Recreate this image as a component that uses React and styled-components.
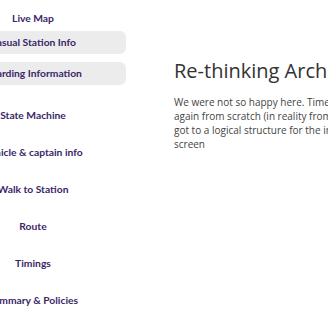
import React from "react";
import styled, { createGlobalStyle } from "styled-components";

const navItems = [
  { label: "Live Map", top: 7 },
  { label: "Casual Station Info", top: 1, active: true },
  { label: "Boarding Information", top: 8, active: true },
  { label: "State Machine", top: 19 },
  { label: "Vehicle & captain info", top: 14 },
  { label: "Walk to Station", top: 14 },
  { label: "Route", top: 14 },
  { label: "Timings", top: 14 },
  { label: "Summary & Policies", top: 14 },
];

export default function App() {
  return (
    <>
      <GlobalStyle />
      <Page>
        <Nav>
          {navItems.map((item) => (
            <NavItem key={item.label} $top={item.top} $active={item.active}>
              {item.label}
            </NavItem>
          ))}
        </Nav>
        <Content>
          <Heading>Re-thinking Architecture</Heading>
          <Body>
            We were not so happy here. Time to start over
            <br />
            again from scratch (in reality from our notes) and
            <br />
            got to a logical structure for the information on the
            <br />
            screen
          </Body>
        </Content>
      </Page>
    </>
  );
}

const GlobalStyle = createGlobalStyle`
  html, body {
    margin: 0;
    padding: 0;
    background: #fff;
    overflow: hidden;
  }
`;

const Page = styled.div`
  display: flex;
  width: 328px;
  height: 320px;
  overflow: hidden;
`;

const Nav = styled.nav`
  flex: 0 0 186px;
  margin-left: -60px;
  display: flex;
  flex-direction: column;
`;

const NavItem = styled.div`
  margin-top: ${(p) => p.$top}px;
  height: 23px;
  line-height: 23px;
  text-align: center;
  white-space: nowrap;
  border-radius: 6px;
  background: ${(p) => (p.$active ? "#ececec" : "transparent")};
  color: #3b2668;
  font-family: Lato, "Noto Sans", sans-serif;
  font-weight: 700;
  font-size: 10.3px;
`;

const Content = styled.main`
  flex: 0 0 auto;
  margin-left: 48px;
  padding-top: 58px;
  white-space: nowrap;
`;

const Heading = styled.h1`
  margin: 0;
  font-family: "Open Sans", sans-serif;
  font-weight: 400;
  font-size: 20px;
  line-height: 26px;
  color: #333;
`;

const Body = styled.p`
  margin: 11px 0 0;
  font-family: "Open Sans", sans-serif;
  font-size: 10px;
  line-height: 14px;
  color: #444;
`;
